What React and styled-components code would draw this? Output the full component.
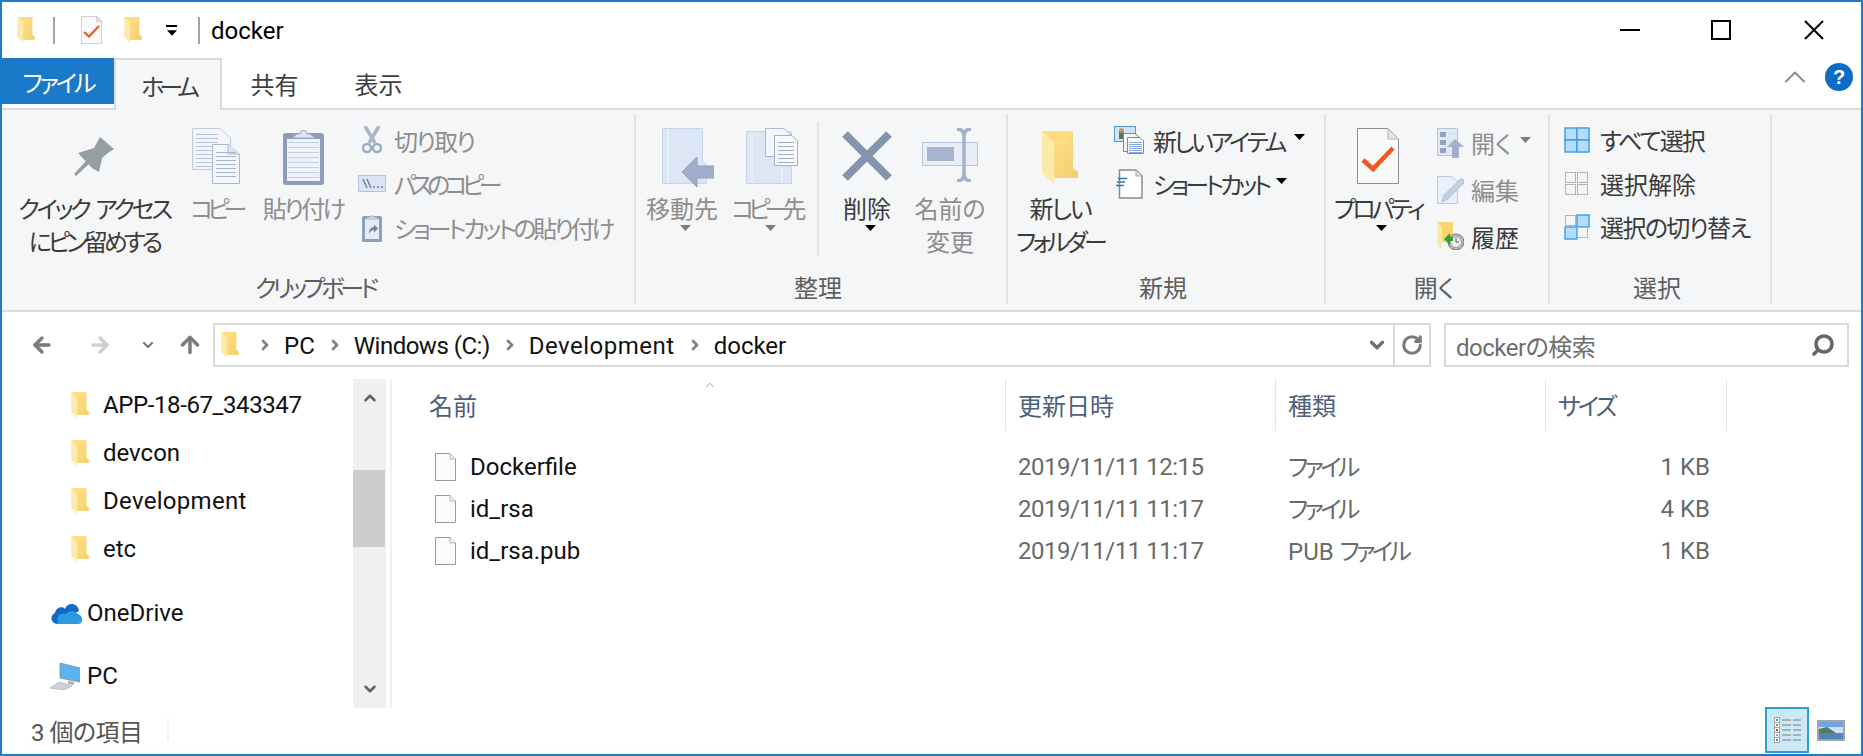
import * as React from 'react'
import styled, { createGlobalStyle } from 'styled-components'
import { ArrowLeft, ArrowRight, ArrowUp, ChevronDown, ChevronUp, ChevronRight, RotateCw, Search } from 'lucide-react'

const Global = createGlobalStyle`
  html, body { margin: 0; padding: 0; background: #fff; }
  body {
    font-family: Roboto, "Noto Sans CJK JP", sans-serif;
    font-size: 24px;
    font-feature-settings: "palt";
    color: #000;
    overflow: hidden;
  }
`

/* ---------- icons ---------- */

const FolderIcon = ({ w = 18, h = 26 }) => (
  <svg width={w} height={h} viewBox="0 0 36 54">
    <defs>
      <linearGradient id="fg" x1="0" y1="0" x2="1" y2="1">
        <stop offset="0" stopColor="#fbe08e" />
        <stop offset="1" stopColor="#f3cf6b" />
      </linearGradient>
    </defs>
    <path d="M0 0 H31 V37 L36 41 V47 H12 V12 Z" fill="#ffdc7c" />
    <path d="M11 13 L23 13 L31 0 V37 L36 41 V47 H12 Z" fill="url(#fg)" />
    <path d="M0 0 L12 12 V54 L0 42 Z" fill="#fdeaa8" />
  </svg>
)

const BlankFile = () => (
  <svg width="21" height="28" viewBox="0 0 21 28">
    <path d="M.5.5 H15 L20.5 6 V27.5 H.5 Z" fill="#fbfbfb" stroke="#9a9a9a" />
    <path d="M15 .5 V6 H20.5" fill="#eee" stroke="#bbb" />
  </svg>
)

const CheckDoc = ({ w = 42, h = 56 }) => (
  <svg width={w} height={h} viewBox="0 0 42 56">
    <path d="M.5.5 H31 L41.5 11 V55.5 H.5 Z" fill="#f9f9f9" stroke="#8f8f8f" />
    <path d="M31 .5 V11 H41.5 Z" fill="#e6e6e6" stroke="#b5b5b5" />
    <path d="M6 32 L16 41 L36 20" fill="none" stroke="#f2581b" strokeWidth="4.5" />
  </svg>
)

const Pin = () => (
  <svg width="40" height="40" viewBox="0 0 40 40">
    <path d="M26 1 L40 13 L34 17 L28 22 L25 36 L18 32 L4 17 L20 12 Z" fill="#959ea2" />
    <path d="M0 38 L2 40 L15 28 L12 25 Z" fill="#959ea2" />
  </svg>
)

const PageLines = ({ x, y, w, h, step = 4, color = '#b4c2da' }) => {
  const rows = []
  for (let yy = y; yy < y + h; yy += step) rows.push(<path key={yy} d={`M${x} ${yy}.5 H${x + w}`} stroke={color} />)
  return <>{rows}</>
}

const CopyIcon = () => (
  <svg width="48" height="56" viewBox="0 0 48 56">
    <path d="M.5.5 H28 L38.5 10 V41.5 H.5 Z" fill="#f4f6fb" stroke="#bfcbe0" />
    <PageLines x={4} y={6} w={22} h={34} />
    <path d="M20.5 16.5 H36 L47.5 26 V55.5 H20.5 Z" fill="#f4f6fb" stroke="#aab9d4" />
    <path d="M36 16.5 V26 H47.5" fill="#dfe5f0" stroke="#aab9d4" />
    <PageLines x={24} y={24} w={20} h={28} color="#a7b6cf" />
  </svg>
)

const PasteIcon = () => (
  <svg width="41" height="58" viewBox="0 0 41 58">
    <rect x="0" y="6" width="41" height="52" rx="3" fill="#8e9cb9" />
    <rect x="4" y="12" width="33" height="42" fill="#eef2fa" />
    <PageLines x={5} y={15} w={31} h={38} step={5} color="#c3cfe2" />
    <path d="M9 11 L14 7 H17 A3.5 3.5 0 1 1 24 7 H27 L32 11 Z" fill="#dfe5f0" stroke="#9eacc6" />
  </svg>
)

const Scissors = () => (
  <svg width="20" height="28" viewBox="0 0 20 28">
    <path d="M3 0 L13 17 M17 0 L7 17" stroke="#a8b4ca" strokeWidth="3.5" fill="none" />
    <circle cx="5" cy="22" r="4" fill="none" stroke="#9dadc8" strokeWidth="2.5" />
    <circle cx="15" cy="22" r="4" fill="none" stroke="#9dadc8" strokeWidth="2.5" />
  </svg>
)

const PathIcon = () => (
  <svg width="28" height="17" viewBox="0 0 28 17">
    <rect x=".5" y=".5" width="27" height="16" fill="#dbe4f2" stroke="#b4c3dc" />
    <path d="M5 4 L9 13 M9 4 L13 13" stroke="#6e7f9e" strokeWidth="1.4" />
    <path d="M15 12 h2 M19 12 h2 M23 12 h2" stroke="#6e7f9e" strokeWidth="1.6" />
  </svg>
)

const ShortcutPaste = () => (
  <svg width="20" height="29" viewBox="0 0 20 29">
    <rect x="0" y="3" width="20" height="26" rx="1.5" fill="#8ea0bf" />
    <rect x="3" y="6" width="14" height="20" fill="#e6ecf6" />
    <path d="M5 4 H8 A2 2 0 0 1 12 4 H15 V7 H5 Z" fill="#c4cede" />
    <path d="M7 21 C7 16 9 14 12 14 V11.5 L16 15.5 L12 19.5 V17 C10 17 8.5 18 7 21 Z" fill="#6f83a6" />
  </svg>
)

const MoveIcon = () => (
  <svg width="52" height="59" viewBox="0 0 52 59">
    <path d="M.5.5 H40.5 V33 L44.5 37 V55.5 H.5 Z" fill="#dde6f4" stroke="#c7d5ea" />
    <path d="M6 1 V55" stroke="#e9eff8" strokeWidth="2" />
    <path d="M20 44 L35 29 V38 H52 V50 H35 V59 Z" fill="#a0aec9" stroke="#8f9fbd" />
  </svg>
)

const CopyToIcon = () => (
  <svg width="52" height="59" viewBox="0 0 52 59">
    <path d="M.5 3.5 H45.5 V55.5 H.5 Z" fill="#dde6f4" stroke="#c7d5ea" />
    <path d="M6 4 V55 M36 40 V55" stroke="#e9eff8" strokeWidth="2" />
    <path d="M19.5.5 H38 L44 6 V28.5 H19.5 Z" fill="#f3f6fb" stroke="#aab9d4" />
    <path d="M28.5 7.5 H46 L51.5 13 V37.5 H28.5 Z" fill="#f7f9fc" stroke="#9fb0ce" />
    <PageLines x={32} y={14} w={16} h={22} color="#9dabc4" />
  </svg>
)

const DeleteIcon = () => (
  <svg width="50" height="50" viewBox="0 0 50 50">
    <path d="M3 3 L47 47 M47 3 L3 47" stroke="#8493ae" strokeWidth="8" />
  </svg>
)

const RenameIcon = () => (
  <svg width="56" height="54" viewBox="0 0 56 54">
    <rect x=".5" y="14.5" width="55" height="23" fill="#e8eef9" stroke="#b6c4dc" />
    <rect x="5" y="19" width="27" height="14" fill="#a6b4cd" />
    <path d="M35 1 C40 1 42 4 42 9 V45 C42 50 40 53 35 53 M49 1 C44 1 42 4 42 9 M42 45 C42 50 44 53 49 53" fill="none" stroke="#a3b2cb" strokeWidth="3.5" />
  </svg>
)

const NewItem = () => (
  <svg width="30" height="28" viewBox="0 0 30 28">
    <rect x=".5" y=".5" width="21" height="15" fill="#cfe3f7" stroke="#5b94cf" />
    <rect x="5" y="4" width="5" height="9" fill="#4d7a55" />
    <circle cx="7.5" cy="4.5" r="2.5" fill="#c2946b" />
    <path d="M9.5 7.5 H21 L25 11 V25.5 H9.5 Z" fill="#f6f6f6" stroke="#888" />
    <path d="M13.5 11.5 H26 L29.5 15 V27.5 H13.5 Z" fill="#fff" stroke="#888" />
    <PageLines x={15} y={16} w={13} h={11} step={2} color="#7fa8d8" />
  </svg>
)

const ShortcutIcon = () => (
  <svg width="27" height="30" viewBox="0 0 27 30">
    <path d="M3.5 1 H20 L26 7 V29 H3.5 Z" fill="#fff" stroke="#8a8a8a" strokeWidth="1.5" />
    <path d="M20 1 V7 H26" fill="#ddd" stroke="#aaa" />
    <path d="M2 9.5 H11 M1 13 H9 M0 16.5 H8" stroke="#2e76bd" strokeWidth="1.6" />
  </svg>
)

const OpenIcon = () => (
  <svg width="27" height="30" viewBox="0 0 27 30">
    <path d="M.5.5 H20.5 V27.5 H.5 Z" fill="#e3eaf5" stroke="#b4c3dc" />
    <rect x="3" y="4" width="6" height="5" fill="#92a2bf" />
    <rect x="3" y="12" width="6" height="5" fill="#92a2bf" />
    <rect x="3" y="20" width="6" height="5" fill="#92a2bf" />
    <path d="M11 6 H18 M11 14 H18" stroke="#ced8e9" />
    <path d="M10 19 L18 11 L27 19 H22 V30 H15 V19 Z" fill="#9fb0cc" />
  </svg>
)

const EditIcon = () => (
  <svg width="27" height="28" viewBox="0 0 27 28">
    <path d="M.5.5 H15 L20.5 6 V27.5 H.5 Z" fill="#eaf0f9" stroke="#bccae0" />
    <path d="M5 26 L7 19 L23 3 A3 3 0 0 1 27 7 L11 23 Z" fill="#c4cfe2" stroke="#a8b6cf" strokeWidth=".7" />
  </svg>
)

const HistoryIcon = () => (
  <svg width="27" height="28" viewBox="0 0 27 28">
    <path d="M0 0 H16 V20 H5 Z" fill="#f6d66d" />
    <path d="M0 0 L5 5 V28 L0 23 Z" fill="#fdeaa8" />
    <circle cx="19" cy="20" r="8" fill="#bcbcbc" stroke="#777" />
    <circle cx="19" cy="20" r="5.5" fill="#eee" stroke="#999" />
    <path d="M19 16 V20 H22" stroke="#555" fill="none" />
    <path d="M7 17 L13 11 V15 H16 V19 H13 V23 Z" fill="#2fa32f" />
  </svg>
)

const SelectGrid = ({ active = [], size = 26 }) => {
  const cell = (x, y, i) => active.includes(i)
    ? <rect key={i} x={x} y={y} width="12" height="12" fill="#b6dcfb" stroke="#3f9be2" strokeWidth="1.4" />
    : <rect key={i} x={x + .5} y={y + .5} width="10" height="10" fill="#f5f5f5" stroke="#b4b4b4" />
  return (
    <svg width={size} height={size} viewBox="0 0 26 26">
      {cell(1, 1, 0)}{cell(13, 1, 1)}{cell(1, 13, 2)}{cell(13, 13, 3)}
    </svg>
  )
}

const OneDriveIcon = () => (
  <svg width="32" height="21" viewBox="0 0 32 21">
    <path d="M8 21 C1 21 -1 13 5 10 C6 4 13 3 15 6 C17 -1 28 -1 29 8 L18 14 Z" fill="#0f6cc4" />
    <path d="M8 21 H28 C33 21 34 13 28 11 C24 6 18 8 16 11 C10 9 6 14 8 21 Z" fill="#2d9be4" />
  </svg>
)

const PcIcon = () => (
  <svg width="30" height="27" viewBox="0 0 30 27">
    <path d="M10 0 L30 5 V19 L10 15 Z" fill="#5ab3ef" stroke="#8b9aa8" />
    <path d="M18 18 L24 19 V22 L18 21 Z" fill="#a8b2bb" />
    <path d="M0 25 L9 19 L22 23 L14 27 Z" fill="#cdd2d6" stroke="#a5abb0" strokeWidth=".6" />
  </svg>
)

const DetailsViewIcon = () => (
  <svg width="27" height="27" viewBox="0 0 27 27">
    {['#4a8cc4', '#8c9a3a', '#b5452d', '#8fb08a', '#4a8cc4'].map((c, i) => (
      <g key={i}>
        <rect x=".5" y={.5 + i * 5} width="5" height="5" fill="#fff" stroke="#a5a5a5" />
        <rect x="2" y={2 + i * 5} width="2" height="2" fill={c} />
        <path d={`M8 ${3 + i * 5} H17 M19 ${3 + i * 5} H27`} stroke="#7d7d7d" />
      </g>
    ))}
  </svg>
)

const LandscapeIcon = () => (
  <svg width="28" height="21" viewBox="0 0 28 21">
    <rect x="1" y="1" width="26" height="19" fill="#6fa4e6" stroke="#a5a5a5" strokeWidth="2" />
    <rect x="2" y="7" width="24" height="6" fill="#cfe0f0" />
    <path d="M2 9 L10 7 L19 13 H2 Z" fill="#4e7f5c" />
    <rect x="2" y="13" width="24" height="6" fill="#4f84b8" />
  </svg>
)

const Caret = ({ color = '#000', w = 11 }) => (
  <svg width={w} height="6" viewBox="0 0 11 6"><path d="M0 0 H11 L5.5 6 Z" fill={color} /></svg>
)

/* ---------- layout ---------- */

const Window = styled.div`
  box-sizing: border-box;
  width: 1863px;
  height: 756px;
  border: 2px solid #1a7ccb;
  display: flex;
  flex-direction: column;
  background: #fff;
`

const TitleBar = styled.div`
  height: 56px;
  display: flex;
  align-items: center;
  padding-left: 15px;
  flex: none;
`

const QuickItem = styled.div`
  display: flex;
  margin-left: ${p => p.$ml || 0}px;
`

const TitleSep = styled.div`
  width: 2px;
  height: 27px;
  background: #a3a3a3;
  margin-left: ${p => p.$ml}px;
`

const QuickDrop = styled.div`
  display: flex;
  flex-direction: column;
  align-items: center;
  gap: 3px;
  margin-left: 24px;
  &::before { content: ''; width: 11px; height: 2px; background: #000; }
`

const TitleText = styled.div`
  margin-left: 11px;
  line-height: 32px;
  padding-top: 2px;
`

const WinControls = styled.div`
  margin-left: auto;
  display: flex;
  height: 100%;
`

const WinButton = styled.div`
  width: ${p => p.$w}px;
  display: flex;
  align-items: center;
  justify-content: center;
  padding-bottom: 1px;
  box-sizing: border-box;
`

const TabRow = styled.div`
  height: 50px;
  display: flex;
  align-items: flex-start;
  flex: none;
  padding-right: 8px;
`

const FileTab = styled.div`
  width: 112px;
  height: 46px;
  background: #1a79c9;
  color: #fff;
  display: flex;
  align-items: center;
  justify-content: center;
  padding-top: 1px;
  box-sizing: border-box;
  letter-spacing: -3px;
`

const Tab = styled.div`
  box-sizing: border-box;
  width: ${p => p.$w}px;
  height: ${p => (p.$active ? 52 : 50)}px;
  display: flex;
  align-items: center;
  justify-content: center;
  color: #3f3f3f;
  letter-spacing: ${p => p.$ls || 0}px;
  ${p => p.$active && `
    background: #f5f6f7;
    border: 2px solid #d9d9d9;
    border-bottom: none;
    position: relative;
    z-index: 1;
  `}
`

const TabTools = styled.div`
  margin-left: auto;
  display: flex;
  align-items: center;
  gap: 12px;
  height: 50px;
  padding-bottom: 12px;
  box-sizing: border-box;
`

const HelpBadge = styled.div`
  width: 28px;
  height: 28px;
  border-radius: 50%;
  background: #0a6ec8;
  color: #fff;
  font: bold 20px/28px "Liberation Sans", sans-serif;
  text-align: center;
`

const Ribbon = styled.div`
  box-sizing: border-box;
  height: 204px;
  flex: none;
  background: #f5f6f7;
  border-top: 2px solid #d9d9d9;
  border-bottom: 2px solid #dadbdc;
  padding: 4px 0 6px;
  display: flex;
`

const Group = styled.div`
  box-sizing: border-box;
  width: ${p => p.$w}px;
  height: 190px;
  border-right: 2px solid #e2e3e4;
  display: flex;
  flex-direction: column;
`

const GroupBody = styled.div`
  display: flex;
  align-items: flex-start;
  padding-top: 8px;
`

const GroupLabel = styled.div`
  margin-top: auto;
  height: 30px;
  line-height: 30px;
  text-align: center;
  color: #5e5e5e;
  padding-right: 6px;
  letter-spacing: ${p => p.$ls || 0}px;
`

const LargeButton = styled.div`
  width: ${p => p.$w}px;
  margin-left: ${p => p.$ml || 0}px;
  flex: none;
  display: flex;
  flex-direction: column;
  align-items: center;
`

const IconSlot = styled.div`
  height: 72px;
  display: flex;
  align-items: flex-start;
  padding-top: ${p => p.$top || 6}px;
  box-sizing: border-box;
  margin-left: ${p => p.$shift || 0}px;
`

const BigText = styled.div`
  line-height: 33px;
  text-align: center;
  white-space: nowrap;
  color: ${p => (p.$off ? '#8e8e8e' : '#3b3b3b')};
  letter-spacing: ${p => p.$ls || 0}px;
  word-spacing: ${p => p.$ws || 0}px;
`

const CaretRow = styled.div`
  display: flex;
  margin-top: -2px;
  margin-left: ${p => p.$shift || 0}px;
`

const RibbonSep = styled.div`
  width: 2px;
  height: 135px;
  background: #e2e3e4;
  margin-left: ${p => p.$ml}px;
  flex: none;
`

const SmallList = styled.div`
  margin-left: ${p => p.$ml}px;
  margin-top: ${p => p.$top}px;
  display: flex;
  flex-direction: column;
  flex: none;
`

const SmallRow = styled.div`
  height: ${p => p.$h}px;
  display: flex;
  align-items: center;
`

const SmallIcon = styled.div`
  width: ${p => p.$w}px;
  margin-right: ${p => p.$gap}px;
  display: flex;
  justify-content: center;
  flex: none;
`

const SmallText = styled.div`
  white-space: nowrap;
  color: ${p => (p.$off ? '#8e8e8e' : '#3b3b3b')};
  letter-spacing: ${p => p.$ls || 0}px;
`

const SmallCaret = styled.div`
  display: flex;
  margin-left: ${p => p.$ml}px;
  margin-bottom: 6px;
`

const AddressRow = styled.div`
  height: 58px;
  flex: none;
  box-sizing: border-box;
  padding: 11px 0 3px 28px;
  display: flex;
  align-items: stretch;
`

const NavIcon = styled.div`
  width: ${p => p.$w}px;
  margin-right: ${p => p.$mr}px;
  display: flex;
  align-items: center;
  justify-content: center;
  flex: none;
`

const AddressBar = styled.div`
  box-sizing: border-box;
  width: 1218px;
  border: 2px solid #d9d9d9;
  display: flex;
  align-items: center;
  padding-left: 6px;
  gap: 11px;
`

const BarFolder = styled.div`
  display: flex;
  margin-right: 7px;
`

const Crumb = styled.span`
  color: #111;
  padding-top: 2px;
  margin-right: 1px;
  letter-spacing: ${p => p.$ls || 0}px;
`

const BarTail = styled.div`
  margin-left: auto;
  display: flex;
  align-items: center;
  height: 100%;
`

const BarDrop = styled.div`
  display: flex;
  padding-right: 5px;
`

const BarRefresh = styled.div`
  width: 34px;
  height: 100%;
  border-left: 2px solid #d9d9d9;
  display: flex;
  align-items: center;
  justify-content: center;
`

const SearchBox = styled.div`
  box-sizing: border-box;
  width: 405px;
  margin-left: 13px;
  border: 2px solid #d9d9d9;
  display: flex;
  align-items: center;
  padding: 0 12px 0 10px;
  color: #6d6d6d;
  justify-content: space-between;
  letter-spacing: -0.5px;
`

const Main = styled.div`
  height: 329px;
  margin-top: 9px;
  flex: none;
  display: flex;
`

const Sidebar = styled.div`
  width: 351px;
  flex: none;
  padding-top: 2px;
  box-sizing: border-box;
`

const NavRow = styled.div`
  height: 48px;
  display: flex;
  align-items: center;
  padding-left: ${p => p.$pad}px;
  gap: ${p => p.$gap}px;
  margin-top: ${p => p.$mt || 0}px;
  color: #111;
  letter-spacing: ${p => p.$ls || 0}px;
`

const Scrollbar = styled.div`
  width: 33px;
  background: #f0f0f0;
  flex: none;
  display: flex;
  flex-direction: column;
`

const ScrollArrow = styled.div`
  height: 38px;
  display: flex;
  align-items: center;
  justify-content: center;
  margin-top: ${p => (p.$end ? 'auto' : 0)};
`

const ScrollThumb = styled.div`
  width: 32px;
  height: 77px;
  margin-top: 53px;
  background: #cdcdcd;
`

const Splitter = styled.div`
  width: 2px;
  background: #f0f0f0;
  margin-left: 4px;
  flex: none;
`

const FilePane = styled.div`
  flex: 1;
`

const columns = '614px 270px 270px 181px'

const HeaderRow = styled.div`
  display: grid;
  grid-template-columns: ${columns};
  height: 52px;
  margin-bottom: 15px;
  position: relative;
`

const HeaderCell = styled.div`
  border-right: 1px solid #e5e5e5;
  padding-left: ${p => p.$pad}px;
  padding-bottom: 2px;
  display: flex;
  align-items: center;
  color: #4c607a;
  letter-spacing: ${p => p.$ls || 0}px;
`

const SortMark = styled.div`
  position: absolute;
  left: 311px;
  top: -1px;
  display: flex;
`

const FileRow = styled.div`
  display: grid;
  grid-template-columns: ${columns};
  height: 42px;
  align-items: center;
`

const NameCell = styled.div`
  display: flex;
  align-items: center;
  gap: 14px;
  padding-left: 43px;
  color: #111;
`

const DetailCell = styled.div`
  color: #6a6a6a;
  padding-left: ${p => p.$pad || 0}px;
  padding-right: ${p => p.$right || 0}px;
  padding-bottom: ${p => p.$lift || 0}px;
  text-align: ${p => (p.$right ? 'right' : 'left')};
  letter-spacing: ${p => p.$ls || 0}px;
`

const Kana = styled.span`
  letter-spacing: -3.6px;
`

const StatusBar = styled.div`
  height: 44px;
  flex: none;
  display: flex;
  align-items: center;
  padding-left: 29px;
  color: #555;
  letter-spacing: -0.5px;
`

const StatusSep = styled.div`
  width: 2px;
  height: 22px;
  background: #f2f2f2;
  margin-left: 24px;
`

const ViewButtons = styled.div`
  margin-left: auto;
  display: flex;
  align-items: center;
  height: 100%;
  padding-right: 16px;
`

const ViewButton = styled.div`
  box-sizing: border-box;
  width: ${p => p.$w}px;
  height: 46px;
  display: flex;
  align-items: center;
  justify-content: center;
  margin-right: ${p => p.$mr || 0}px;
  ${p => p.$active && `
    background: #cbe8f6;
    border: 2px solid #26a0da;
  `}
`

const files = [
  { name: 'Dockerfile', date: '2019/11/11 12:15', prefix: '', size: '1 KB' },
  { name: 'id_rsa', date: '2019/11/11 11:17', prefix: '', size: '4 KB' },
  { name: 'id_rsa.pub', date: '2019/11/11 11:17', prefix: 'PUB ', size: '1 KB' },
]

const navFolders = [
  { name: 'APP-18-67_343347', ls: -0.4 },
  { name: 'devcon', ls: 0 },
  { name: 'Development', ls: 0.3 },
  { name: 'etc', ls: 0 },
]

const crumbs = [
  { name: 'PC', ls: 0 },
  { name: 'Windows (C:)', ls: -0.5 },
  { name: 'Development', ls: 0.5 },
  { name: 'docker', ls: 0 },
]

const Crumbs = () => crumbs.map(c => (
  <React.Fragment key={c.name}>
    <ChevronRight size={16} strokeWidth={4} color="#808080" />
    <Crumb $ls={c.ls}>{c.name}</Crumb>
  </React.Fragment>
))

export default function App() {
  return (
    <Window>
      <Global />
      <TitleBar>
        <QuickItem><FolderIcon /></QuickItem>
        <TitleSep $ml={18} />
        <QuickItem $ml={26}><CheckDoc w={21} h={28} /></QuickItem>
        <QuickItem $ml={22}><FolderIcon /></QuickItem>
        <QuickDrop><Caret w={10} /></QuickDrop>
        <TitleSep $ml={21} />
        <TitleText>docker</TitleText>
        <WinControls>
          <WinButton $w={91}><svg width="20" height="2"><rect width="20" height="2" fill="#000" /></svg></WinButton>
          <WinButton $w={91}><svg width="20" height="20"><rect x="1" y="1" width="18" height="18" fill="none" stroke="#000" strokeWidth="2" /></svg></WinButton>
          <WinButton $w={95}><svg width="20" height="20"><path d="M1 1 L19 19 M19 1 L1 19" stroke="#000" strokeWidth="2" /></svg></WinButton>
        </WinControls>
      </TitleBar>

      <TabRow>
        <FileTab>ファイル</FileTab>
        <Tab $w={108} $active $ls={-5}>ホーム</Tab>
        <Tab $w={105}>共有</Tab>
        <Tab $w={103}>表示</Tab>
        <TabTools>
          <ChevronUp size={36} strokeWidth={1.3} color="#8d8d8d" />
          <HelpBadge>?</HelpBadge>
        </TabTools>
      </TabRow>

      <Ribbon>
        <Group $w={634}>
          <GroupBody>
            <LargeButton $w={150} $ml={17}>
              <IconSlot $top={14}><Pin /></IconSlot>
              <BigText $ls={-3.2} $ws={4}>クイック アクセス</BigText>
              <BigText $ls={-3.9}>にピン留めする</BigText>
            </LargeButton>
            <LargeButton $w={60} $ml={17}>
              <IconSlot><CopyIcon /></IconSlot>
              <BigText $off $ls={-6}>コピー</BigText>
            </LargeButton>
            <LargeButton $w={90} $ml={12}>
              <IconSlot $top={5}><PasteIcon /></IconSlot>
              <BigText $off $ls={-2.7}>貼り付け</BigText>
            </LargeButton>
            <SmallList $ml={8} $top={-4}>
              <SmallRow $h={44}><SmallIcon $w={32} $gap={6}><Scissors /></SmallIcon><SmallText $off $ls={-2}>切り取り</SmallText></SmallRow>
              <SmallRow $h={43}><SmallIcon $w={32} $gap={6}><PathIcon /></SmallIcon><SmallText $off $ls={-5.5}>パスのコピー</SmallText></SmallRow>
              <SmallRow $h={45}><SmallIcon $w={32} $gap={6}><ShortcutPaste /></SmallIcon><SmallText $off $ls={-3.2}>ショートカットの貼り付け</SmallText></SmallRow>
            </SmallList>
          </GroupBody>
          <GroupLabel $ls={-4}>クリップボード</GroupLabel>
        </Group>

        <Group $w={372}>
          <GroupBody>
            <LargeButton $w={80} $ml={6}>
              <IconSlot $shift={12}><MoveIcon /></IconSlot>
              <BigText $off>移動先</BigText>
              <CaretRow $shift={6}><Caret color="#7d7d7d" /></CaretRow>
            </LargeButton>
            <LargeButton $w={80} $ml={4}>
              <IconSlot $shift={12}><CopyToIcon /></IconSlot>
              <BigText $off $ls={-6}>コピー先</BigText>
              <CaretRow $shift={8}><Caret color="#7d7d7d" /></CaretRow>
            </LargeButton>
            <RibbonSep $ml={11} />
            <LargeButton $w={60} $ml={18}>
              <IconSlot $top={9}><DeleteIcon /></IconSlot>
              <BigText>削除</BigText>
              <CaretRow $shift={6}><Caret /></CaretRow>
            </LargeButton>
            <LargeButton $w={80} $ml={13}>
              <IconSlot><RenameIcon /></IconSlot>
              <BigText $off>名前の</BigText>
              <BigText $off>変更</BigText>
            </LargeButton>
          </GroupBody>
          <GroupLabel>整理</GroupLabel>
        </Group>

        <Group $w={318}>
          <GroupBody>
            <LargeButton $w={100} $ml={2}>
              <IconSlot $top={9}><FolderIcon w={36} h={54} /></IconSlot>
              <BigText $ls={-2}>新しい</BigText>
              <BigText $ls={-3.8}>フォルダー</BigText>
            </LargeButton>
            <SmallList $ml={4} $top={-4}>
              <SmallRow $h={44}>
                <SmallIcon $w={30} $gap={9}><NewItem /></SmallIcon>
                <SmallText $ls={-3}>新しいアイテム</SmallText>
                <SmallCaret $ml={10}><Caret /></SmallCaret>
              </SmallRow>
              <SmallRow $h={43}>
                <SmallIcon $w={30} $gap={9}><ShortcutIcon /></SmallIcon>
                <SmallText $ls={-3.8}>ショートカット</SmallText>
                <SmallCaret $ml={8}><Caret /></SmallCaret>
              </SmallRow>
            </SmallList>
          </GroupBody>
          <GroupLabel>新規</GroupLabel>
        </Group>

        <Group $w={224}>
          <GroupBody>
            <LargeButton $w={90} $ml={7}>
              <IconSlot><CheckDoc /></IconSlot>
              <BigText $ls={-3.8}>プロパティ</BigText>
              <CaretRow $shift={6}><Caret /></CaretRow>
            </LargeButton>
            <SmallList $ml={14} $top={-3}>
              <SmallRow $h={47}>
                <SmallIcon $w={27} $gap={7}><OpenIcon /></SmallIcon>
                <SmallText $off>開く</SmallText>
                <SmallCaret $ml={8}><Caret color="#7d7d7d" /></SmallCaret>
              </SmallRow>
              <SmallRow $h={47}><SmallIcon $w={27} $gap={7}><EditIcon /></SmallIcon><SmallText $off>編集</SmallText></SmallRow>
              <SmallRow $h={46}><SmallIcon $w={27} $gap={7}><HistoryIcon /></SmallIcon><SmallText>履歴</SmallText></SmallRow>
            </SmallList>
          </GroupBody>
          <GroupLabel>開く</GroupLabel>
        </Group>

        <Group $w={222}>
          <GroupBody>
            <SmallList $ml={14} $top={-5}>
              <SmallRow $h={45}><SmallIcon $w={26} $gap={10}><SelectGrid active={[0, 1, 2, 3]} /></SmallIcon><SmallText $ls={-2}>すべて選択</SmallText></SmallRow>
              <SmallRow $h={43}><SmallIcon $w={26} $gap={10}><SelectGrid /></SmallIcon><SmallText>選択解除</SmallText></SmallRow>
              <SmallRow $h={43}><SmallIcon $w={26} $gap={10}><SelectGrid active={[1, 2]} /></SmallIcon><SmallText $ls={-1.6}>選択の切り替え</SmallText></SmallRow>
            </SmallList>
          </GroupBody>
          <GroupLabel>選択</GroupLabel>
        </Group>
      </Ribbon>

      <AddressRow>
        <NavIcon $w={24} $mr={34}><ArrowLeft size={28} strokeWidth={3.4} color="#7a7a7a" /></NavIcon>
        <NavIcon $w={24} $mr={28}><ArrowRight size={28} strokeWidth={3.4} color="#cfcfcf" /></NavIcon>
        <NavIcon $w={16} $mr={21}><ChevronDown size={18} strokeWidth={3.4} color="#7a7a7a" /></NavIcon>
        <NavIcon $w={26} $mr={10}><ArrowUp size={30} strokeWidth={3.2} color="#7a7a7a" /></NavIcon>
        <AddressBar>
          <BarFolder><FolderIcon /></BarFolder>
          <Crumbs />
          <BarTail>
            <BarDrop><ChevronDown size={22} strokeWidth={3.6} color="#6f6f6f" /></BarDrop>
            <BarRefresh><RotateCw size={22} strokeWidth={3.4} color="#7a7a7a" /></BarRefresh>
          </BarTail>
        </AddressBar>
        <SearchBox>
          <span>dockerの検索</span>
          <Search size={24} strokeWidth={3.6} color="#666" style={{ transform: 'scaleX(-1)' }} />
        </SearchBox>
      </AddressRow>

      <Main>
        <Sidebar>
          {navFolders.map(n => (
            <NavRow key={n.name} $pad={69} $gap={14} $ls={n.ls}><FolderIcon />{n.name}</NavRow>
          ))}
          <NavRow $pad={48} $gap={5} $mt={16}><OneDriveIcon />OneDrive</NavRow>
          <NavRow $pad={48} $gap={7} $mt={15}><PcIcon />PC</NavRow>
        </Sidebar>
        <Scrollbar>
          <ScrollArrow><ChevronUp size={18} strokeWidth={3.4} color="#606060" /></ScrollArrow>
          <ScrollThumb />
          <ScrollArrow $end><ChevronDown size={18} strokeWidth={3.4} color="#606060" /></ScrollArrow>
        </Scrollbar>
        <Splitter />
        <FilePane>
          <HeaderRow>
            <SortMark><ChevronUp size={14} strokeWidth={1.5} color="#9a9a9a" /></SortMark>
            <HeaderCell $pad={37}>名前</HeaderCell>
            <HeaderCell $pad={12}>更新日時</HeaderCell>
            <HeaderCell $pad={12}>種類</HeaderCell>
            <HeaderCell $pad={12} $ls={-2.8}>サイズ</HeaderCell>
          </HeaderRow>
          {files.map(f => (
            <FileRow key={f.name}>
              <NameCell><BlankFile />{f.name}</NameCell>
              <DetailCell $pad={12} $ls={-0.5}>{f.date}</DetailCell>
              <DetailCell $pad={12} $lift={4}>{f.prefix}<Kana>ファイル</Kana></DetailCell>
              <DetailCell $right={17}>{f.size}</DetailCell>
            </FileRow>
          ))}
        </FilePane>
      </Main>

      <StatusBar>
        3 個の項目
        <StatusSep />
        <ViewButtons>
          <ViewButton $w={44} $mr={8} $active><DetailsViewIcon /></ViewButton>
          <ViewButton $w={28}><LandscapeIcon /></ViewButton>
        </ViewButtons>
      </StatusBar>
    </Window>
  )
}
